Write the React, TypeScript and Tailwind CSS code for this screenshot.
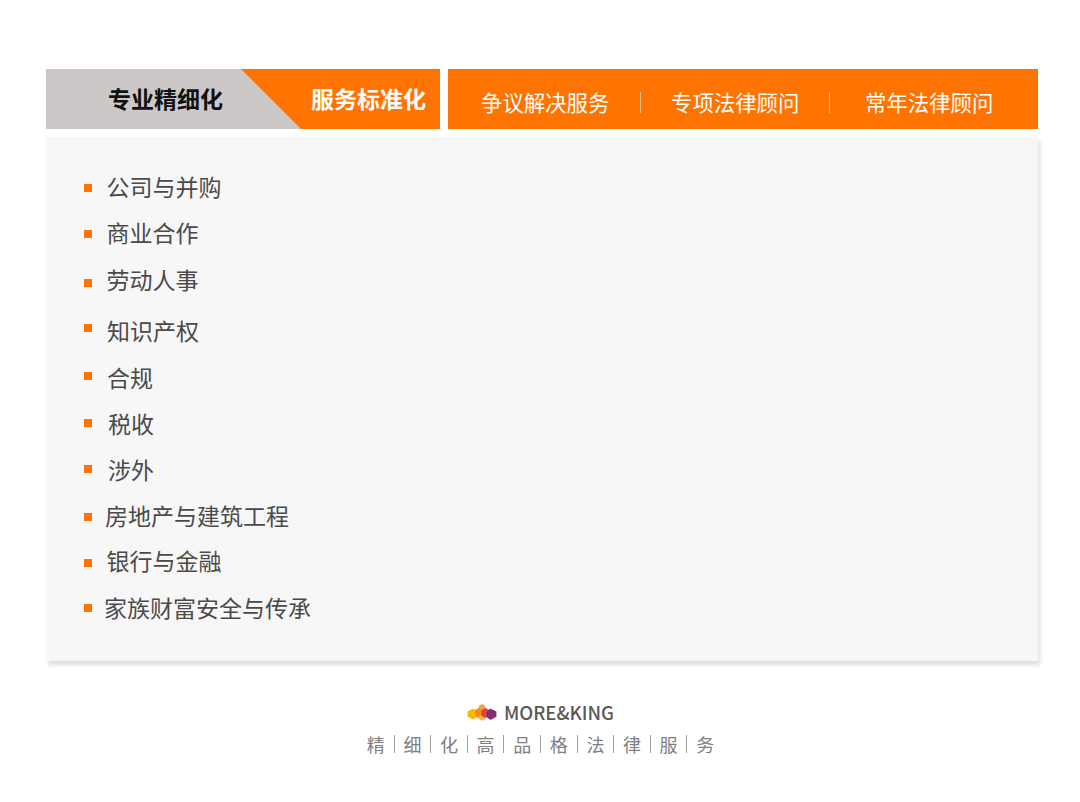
import React from "react";

const CJK = "font-['Noto_Sans_CJK_SC','Noto_Sans',sans-serif]";

// row spacing in the picture is not regular, so each row carries its own tweaks
const items = [
  { text: "公司与并购", row: "mt-0", bullet: "mb-[2px]", label: "ml-[14.5px]" },
  { text: "商业合作", row: "mt-[12px]", bullet: "mb-[2px]", label: "ml-[14.5px]" },
  { text: "劳动人事", row: "mt-[13px]", bullet: "mt-[2px]", label: "ml-[14.5px]" },
  { text: "知识产权", row: "mt-[17px]", bullet: "mb-[10px]", label: "ml-[15px]" },
  { text: "合规", row: "mt-[13px]", bullet: "mb-[8px]", label: "ml-[15px]" },
  { text: "税收", row: "mt-[12px]", bullet: "mb-[6px]", label: "ml-[16px]" },
  { text: "涉外", row: "mt-[12px]", bullet: "mb-[6px]", label: "ml-[16px]" },
  { text: "房地产与建筑工程", row: "mt-[12px]", bullet: "mb-[2px]", label: "ml-[13px]" },
  { text: "银行与金融", row: "mt-[11px]", bullet: "mb-0", label: "ml-[14.5px]" },
  { text: "家族财富安全与传承", row: "mt-[13px]", bullet: "mb-[4px]", label: "ml-[12px]" },
];

const slogan = ["精", "细", "化", "高", "品", "格", "法", "律", "服", "务"];

function Logo() {
  return (
    <svg width="30" height="17" viewBox="0 0 30 17" className="block" stroke="#ffffff" strokeOpacity="0.35" strokeWidth="0.4">
      <polygon points="15,0 18,1.800 18,4 15,5.500 12,4 12,1.800" fill="#f4a236" />
      <polygon points="6,4.500 11,7.300 11,12.700 6,15.500 0.500,12.700 0.500,7.300" fill="#fbb900" />
      <polygon points="12,3.500 17,6.500 17,11.500 12,14.500 7.500,11.500 7.500,6.500" fill="#f58a12" />
      <polygon points="15,10.500 18,12.500 18,15 15,17 12,15 12,12.500" fill="#f9b733" />
      <polygon points="18,3.500 22.500,6.200 22.500,11.500 18,14.200 14,11.500 14,6.200" fill="#e6432e" />
      <polygon points="23.500,4.500 29.500,7.500 29.500,12.800 23.500,16 19,12.800 19,7.500" fill="#8b2a6f" />
    </svg>
  );
}

export default function App() {
  return (
    <div className={`w-[1080px] h-[802px] bg-white pt-[69px] pl-[46px] pr-[42px] ${CJK}`}>
      <div className="flex h-[60px]">
        <div className="flex w-[394px] bg-[#ff7300]">
          <div className="w-[255px] bg-[#cdc8c8] [clip-path:polygon(0_0,195px_0,255px_100%,0_100%)] flex items-center pl-[62px] pb-[1px]">
            <span className="text-[23px] leading-none font-bold text-[#111111]">专业精细化</span>
          </div>
          <div className="flex items-center pl-[10px] pb-[2px]">
            <span className="text-[23px] leading-none font-bold text-white">服务标准化</span>
          </div>
        </div>
        <div className="ml-[8px] w-[590px] bg-[#ff7300] flex items-center pl-[33px] pt-[6px] text-white text-[21.4px] leading-none">
          <span className="w-[128px] whitespace-nowrap">争议解决服务</span>
          <span className="ml-[31px] w-px h-[21px] bg-[#ffc08a]" />
          <span className="ml-[30px] w-[128px] whitespace-nowrap">专项法律顾问</span>
          <span className="ml-[30px] w-px h-[21px] bg-[#ffc08a]" />
          <span className="ml-[35px] w-[128px] whitespace-nowrap">常年法律顾问</span>
        </div>
      </div>

      <div className="mt-[8px] h-[524px] bg-[#f7f7f7] shadow-[2px_4px_4px_rgba(0,0,0,0.13)] pt-[35px] pl-[38px]">
        {items.map((item) => (
          <div key={item.text} className={`flex items-center h-[34px] ${item.row}`}>
            <span className={`w-[8px] h-[8px] bg-[#ff7300] shrink-0 ${item.bullet}`} />
            <span className={`pb-[6px] text-[23px] leading-none text-[#4a4a4a] whitespace-nowrap ${item.label}`}>
              {item.text}
            </span>
          </div>
        ))}
      </div>

      <div className="mt-[41px] flex items-center justify-center gap-[7px] h-[20px] pr-[3px]">
        <Logo />
        <span className="text-[18.5px] leading-none font-medium text-[#595959]">MORE&amp;KING</span>
      </div>
      <div className="mt-[13px] flex items-center justify-center pr-[3px] text-[18px] leading-none text-[#808080]">
        {slogan.map((ch, i) => (
          <React.Fragment key={ch}>
            {i > 0 && <span className="mx-[8.8px] w-px h-[18px] bg-[#a0a0a0]" />}
            <span>{ch}</span>
          </React.Fragment>
        ))}
      </div>
    </div>
  );
}
